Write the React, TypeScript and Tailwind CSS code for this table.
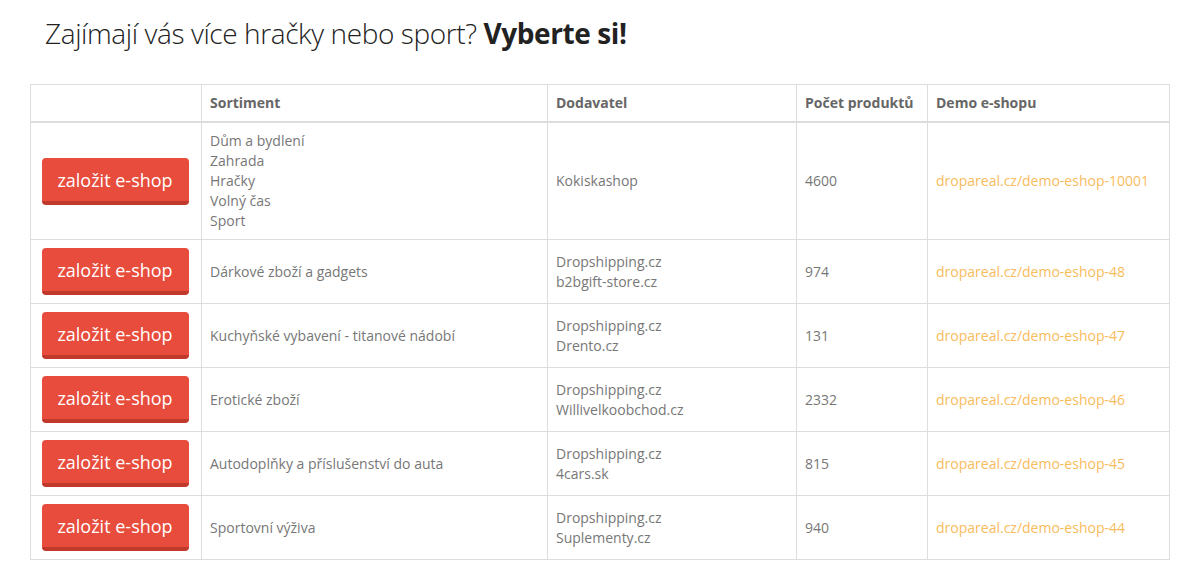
import React from 'react'

type Row = {
  sortiment: string[]
  dodavatel: string[]
  count: string
  demo: string
}

const rows: Row[] = [
  {
    sortiment: ['Dům a bydlení', 'Zahrada', 'Hračky', 'Volný čas', 'Sport'],
    dodavatel: ['Kokiskashop'],
    count: '4600',
    demo: 'dropareal.cz/demo-eshop-10001',
  },
  {
    sortiment: ['Dárkové zboží a gadgets'],
    dodavatel: ['Dropshipping.cz', 'b2bgift-store.cz'],
    count: '974',
    demo: 'dropareal.cz/demo-eshop-48',
  },
  {
    sortiment: ['Kuchyňské vybavení - titanové nádobí'],
    dodavatel: ['Dropshipping.cz', 'Drento.cz'],
    count: '131',
    demo: 'dropareal.cz/demo-eshop-47',
  },
  {
    sortiment: ['Erotické zboží'],
    dodavatel: ['Dropshipping.cz', 'Willivelkoobchod.cz'],
    count: '2332',
    demo: 'dropareal.cz/demo-eshop-46',
  },
  {
    sortiment: ['Autodoplňky a příslušenství do auta'],
    dodavatel: ['Dropshipping.cz', '4cars.sk'],
    count: '815',
    demo: 'dropareal.cz/demo-eshop-45',
  },
  {
    sortiment: ['Sportovní výživa'],
    dodavatel: ['Dropshipping.cz', 'Suplementy.cz'],
    count: '940',
    demo: 'dropareal.cz/demo-eshop-44',
  },
]

const cell = 'border border-[#ddd] px-2 py-2 align-middle'
const head = `${cell} border-b-2 font-bold text-[#666]`

export default function App() {
  return (
    <div className="min-h-screen bg-white font-['Open_Sans',sans-serif] text-[14px] leading-5 text-[#777]">
      <div className="px-[30px]">
        <h1 className="pl-[15px] pt-[14px] text-[28px] leading-[38px] font-light text-[#222] tracking-[-0.4px]">
          Zajímají vás více hračky nebo sport? <span className="font-bold">Vyberte si!</span>
        </h1>

        <table className="mt-[32px] w-[1140px] border-collapse table-fixed">
          <colgroup>
            <col className="w-[171px]" />
            <col className="w-[346px]" />
            <col className="w-[249px]" />
            <col className="w-[131px]" />
            <col />
          </colgroup>
          <thead>
            <tr className="text-left">
              <th className={head}></th>
              <th className={head}>Sortiment</th>
              <th className={head}>Dodavatel</th>
              <th className={head}>Počet produktů</th>
              <th className={head}>Demo e-shopu</th>
            </tr>
          </thead>
          <tbody>
            {rows.map((r) => (
              <tr key={r.demo}>
                <td className={`${cell} pr-[10px] text-center`}>
                  <a className="inline-block w-[147px] rounded-[4px] border-b-4 border-[#c0392b] bg-[#e74c3c] pt-[10px] pb-[9px] text-[18px] leading-6 text-white">
                    založit e-shop
                  </a>
                </td>
                <td className={cell}>
                  {r.sortiment.map((s) => (
                    <div key={s}>{s}</div>
                  ))}
                </td>
                <td className={cell}>
                  {r.dodavatel.map((s) => (
                    <div key={s}>{s}</div>
                  ))}
                </td>
                <td className={cell}>{r.count}</td>
                <td className={cell}>
                  <a className="text-[#f8bc5c]">{r.demo}</a>
                </td>
              </tr>
            ))}
          </tbody>
        </table>
      </div>
    </div>
  )
}
